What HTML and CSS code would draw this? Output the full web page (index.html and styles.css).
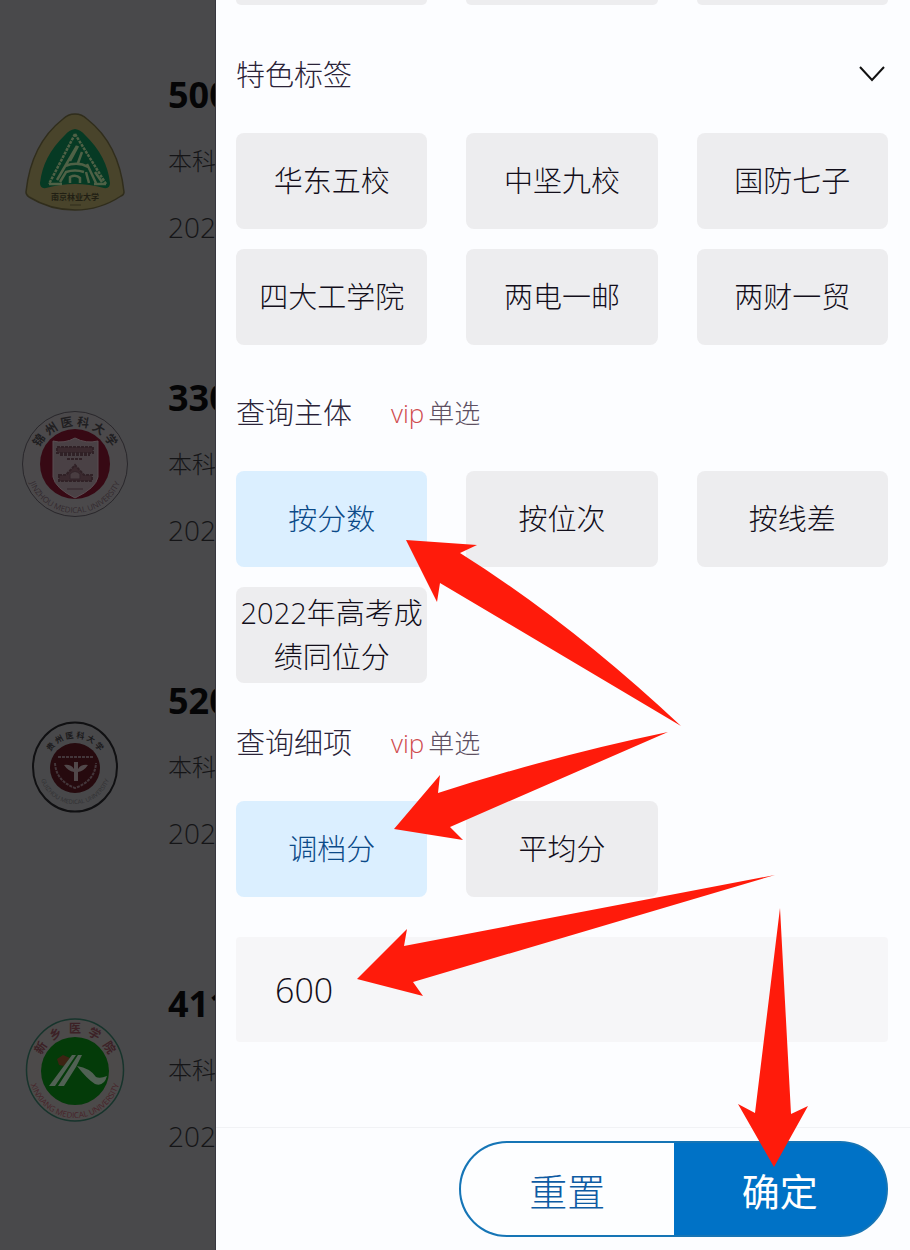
FILE: index.html
```html
<!DOCTYPE html>
<html lang="zh-CN">
<head>
<meta charset="utf-8">
<meta name="viewport" content="width=device-width, initial-scale=1">
<title>筛选</title>
<link rel="stylesheet" href="styles.css">
</head>
<body>
<div class="screen">
  <main class="list">
    <article class="school">
      <svg class="logo" viewBox="0 0 110 110" aria-hidden="true">
        <path d="M55 8Q62 8 67 13Q99 38 104 86Q104 89 101 90Q80 104 55 104Q30 104 9 91Q6 89 6 86Q11 38 43 13Q48 8 55 8Z" fill="#49442b" stroke="#302d1c" stroke-width="1.5"/>
        <path d="M55 23Q61 24 65 29Q87 50 90 77Q90 83 84 82Q55 74 26 82Q20 83 20 77Q23 50 45 29Q49 24 55 23Z" fill="#063a24"/>
        <g fill="none" stroke="#4f6146" stroke-width="2.5">
          <path d="M55 28L29 78M55 28L86 78" stroke-dasharray="3 1"/>
          <path d="M29 78H42M74 78H86M37 74L57 40M58 40L50 55M62 46L58 57M45 60Q58 55 68 61M40 76L46 66Q55 63 64 66M50 77V71Q56 68 60 72V77M67 58L76 77M66 66L69 77M75 66L82 76"/>
        </g>
        <text x="55" y="94" class="mark mark-small" fill="#211f14">南京林业大学</text>
        <path d="M50 99H61" stroke="#302d1c"/>
      </svg>
      <div class="info"><h2>500</h2><p class="kind">本科</p><p>2022</p></div>
    </article>
    <article class="school">
      <svg class="logo" viewBox="0 0 110 110" aria-hidden="true">
        <defs>
          <path id="arc-top" d="M15 57A40 40 0 0 1 95 57"/>
          <path id="arc-low" d="M6 55A49 49 0 0 0 104 55"/>
        </defs>
        <circle cx="55" cy="55" r="52.500" fill="#4b494b" stroke="#29272b"/>
        <circle cx="55" cy="55" r="35" fill="#370914"/>
        <path d="M33 32Q44 35 55 29Q66 35 78 32V68Q76 79 55 89Q35 79 33 68Z" fill="#4a4145" stroke="#5a4e52"/>
        <path d="M37 38H73V44H37ZM40 46H70M47 50H63M39 66H46L55 56L64 66H72V72H39Z" fill="#3a292e" stroke="#302126" stroke-width="2" stroke-dasharray="3 1"/>
        <path d="M50 70V65Q55 60 60 65V70ZM47 80H63" fill="#493d41" stroke="#33252a"/>
        <text class="mark mark-large" fill="#1f1e21"><textPath href="#arc-top" startOffset="50%">锦 州 医 科 大 学</textPath></text>
        <text class="ring-text" fill="#332a2f"><textPath href="#arc-low" startOffset="50%">JINZHOU MEDICAL UNIVERSITY</textPath></text>
      </svg>
      <div class="info"><h2>330</h2><p class="kind">本科</p><p>2022</p></div>
    </article>
    <article class="school">
      <svg class="logo" viewBox="0 0 110 110" aria-hidden="true">
        <defs>
          <path id="arc-inner" d="M26 55A29 29 0 0 1 84 55"/>
          <path id="arc-base" d="M19 56A36 36 0 0 0 91 56"/>
        </defs>
        <ellipse cx="55" cy="55" rx="42" ry="44.500" fill="#48484a" stroke="#101012" stroke-width="2"/>
        <circle cx="55" cy="56" r="25" fill="#260a0e"/>
        <path d="M38 45H73M35 51Q36 69 55 76Q75 69 76 51" fill="none" stroke="#43363a" stroke-width="2" stroke-dasharray="3 1"/>
        <path d="M44 53Q51 52 54 57V50H58V57Q61 52 68 53Q64 59 58 60V69H54V60Q48 59 44 53Z" fill="#51484a"/>
        <text class="mark mark-small" fill="#1a191b"><textPath href="#arc-inner" startOffset="50%">贵 州 医 科 大 学</textPath></text>
        <text class="ring-text ring-small" fill="#303032"><textPath href="#arc-base" startOffset="50%">GUIZHOU MEDICAL UNIVERSITY</textPath></text>
      </svg>
      <div class="info"><h2>520</h2><p class="kind">本科</p><p>2022</p></div>
    </article>
    <article class="school">
      <svg class="logo" viewBox="0 0 110 110" aria-hidden="true">
        <defs>
          <path id="arc-name" d="M18 56A37 38 0 0 1 92 56"/>
          <path id="arc-foot" d="M9 56A46 47 0 0 0 101 56"/>
        </defs>
        <ellipse cx="55" cy="55" rx="48.500" ry="51" fill="#4c4a4a" stroke="#17342c" stroke-width="1.500"/>
        <circle cx="55" cy="56" r="34" fill="#043b09"/>
        <path d="M37 44L43 40L50 43L44 51L39 50Z" fill="#3c2312"/>
        <path d="M29 71L52 40H56L35 71ZM38 71L58 40H62L56 52L44 71ZM57 51Q70 53 76 62Q80 64 87 61Q84 72 75 69Q67 64 57 51Z" fill="#516154"/>
        <text class="mark mark-large" fill="#3c2126"><textPath href="#arc-name" startOffset="50%">新 &#160;乡 &#160;医 &#160;学 &#160;院</textPath></text>
        <text class="ring-text" fill="#482329"><textPath href="#arc-foot" startOffset="50%">XINXIANG MEDICAL UNIVERSITY</textPath></text>
      </svg>
      <div class="info"><h2>411</h2><p class="kind">本科</p><p>2022</p></div>
    </article>
  </main>

  <form class="drawer">
    <div class="grid stubs" aria-hidden="true"><span></span><span></span><span></span></div>

    <section class="group">
      <header class="heading">
        <h3>特色标签</h3>
        <button class="toggle" type="button" aria-label="展开">
          <svg viewBox="0 0 28 20" width="28" height="20"><path d="M3 2L15 15L27 2" fill="none" stroke="#111" stroke-width="2"/></svg>
        </button>
      </header>
      <div class="grid">
        <button type="button" class="chip">华东五校</button>
        <button type="button" class="chip">中坚九校</button>
        <button type="button" class="chip">国防七子</button>
        <button type="button" class="chip">四大工学院</button>
        <button type="button" class="chip">两电一邮</button>
        <button type="button" class="chip">两财一贸</button>
      </div>
    </section>

    <section class="group subject">
      <header class="heading"><h3>查询主体</h3><p class="hint"><span class="vip">vip</span>单选</p></header>
      <div class="grid">
        <button type="button" class="chip selected" aria-pressed="true">按分数</button>
        <button type="button" class="chip">按位次</button>
        <button type="button" class="chip">按线差</button>
        <button type="button" class="chip">2022年高考成绩同位分</button>
      </div>
    </section>

    <section class="group detail">
      <header class="heading"><h3>查询细项</h3><p class="hint"><span class="vip">vip</span>单选</p></header>
      <div class="grid">
        <button type="button" class="chip selected" aria-pressed="true">调档分</button>
        <button type="button" class="chip">平均分</button>
      </div>
    </section>

    <input class="score" type="text" inputmode="numeric" value="600" aria-label="分数">

    <footer class="actions">
      <div class="pill">
        <button type="reset" class="reset">重置</button>
        <button type="submit" class="confirm">确定</button>
      </div>
    </footer>

    <svg class="arrows" viewBox="215 0 695 1250" width="695" height="1250" aria-hidden="true">
      <path d="M406 540L477 545L460 553Q570 622 681 726L440 583L437 602Z"/>
      <path d="M394 829L440 775L438 793Q553 756 668 732L450 827L463 840Z"/>
      <path d="M357 979L407 929L404 946L775 875L413 982L423 996Z"/>
      <path d="M780 908L791 1114L808 1106L774 1167L738 1104L755 1113Z"/>
    </svg>
  </form>
</div>
</body>
</html>
```
FILE: styles.css
```css
* { box-sizing: border-box; }

body {
  margin: 0;
  font-family: "Open Sans", "Noto Sans CJK SC", sans-serif;
  font-weight: 300;
  color: #120e1a;
}

h2, h3, p { margin: 0; font-weight: inherit; }

button, input { font: inherit; color: inherit; border: 0; padding: 0; }

.screen {
  display: grid;
  grid-template-columns: 216px 1fr;
  min-height: 100vh;
}

/* Dimmed result list behind the drawer */
.list {
  overflow: hidden;
  padding-top: 9px;
  background: #49494b;
  border-right: 1px solid #37373f;
}

.school {
  display: flex;
  align-items: center;
  gap: 38px;
  height: 303px;
  padding-left: 20px;
  white-space: nowrap;
}

.logo { flex: none; width: 110px; height: 110px; }

.info { font-size: 28px; line-height: 66px; color: #151517; }
.info h2 { font-size: 36px; font-weight: 700; line-height: 66px; color: #050506; }
.info .kind { font-size: 24px; }

.mark { font-size: 10px; font-weight: 700; text-anchor: middle; }
.mark-small { font-size: 8px; }
.mark-large { font-size: 12px; }
.ring-text { font-size: 8px; font-weight: 400; text-anchor: middle; }
.ring-small { font-size: 6px; }

/* Filter drawer */
.drawer {
  position: relative;
  display: flex;
  flex-direction: column;
  padding: 0 22px 0 20px;
  background: #fcfdff;
}

.grid {
  display: grid;
  grid-template-columns: repeat(3, 1fr);
  gap: 20px 39px;
}

.stubs span { height: 5px; border-radius: 0 0 8px 8px; background: #ededef; }

.group { margin-top: 50px; }
.subject { margin-top: 48px; }
.detail { margin-top: 40px; }

.heading {
  display: flex;
  align-items: center;
  height: 40px;
  margin-bottom: 38px;
}

.heading h3 { font-size: 29px; line-height: 40px; color: #2a2338; }

.hint { margin-left: 39px; font-size: 26px; line-height: 40px; color: #5e5062; }
.vip { color: #cf4a4c; margin-right: 4px; }

.toggle { display: flex; margin-left: auto; margin-right: 3px; background: none; }

.chip {
  height: 96px;
  border-radius: 8px;
  background: #ededef;
  font-size: 29px;
  line-height: 44px;
}

.selected { background: #dbefff; color: #0b4a88; }

.score {
  width: 100%;
  height: 105px;
  margin-top: 40px;
  padding: 0 39px;
  border-radius: 4px;
  background: #f6f6f8;
  font-size: 34px;
}

.actions {
  display: flex;
  justify-content: flex-end;
  margin: auto -22px 0 -20px;
  padding: 13px 22px;
  border-top: 1px solid #f1f2f5;
}

.pill {
  display: grid;
  grid-template-columns: 1fr 1fr;
  width: 66%;
  min-width: 300px;
  height: 96px;
  border: 2px solid #1675b5;
  border-radius: 48px;
  overflow: hidden;
  background: #0072c6;
  font-size: 38px;
}

.reset { background: #fdfeff; color: #0d5ba3; }
.confirm { background: #0072c6; color: #fff; font-weight: 400; }

.arrows { position: absolute; left: -1px; top: 0; fill: #ff1b0b; pointer-events: none; }
```
